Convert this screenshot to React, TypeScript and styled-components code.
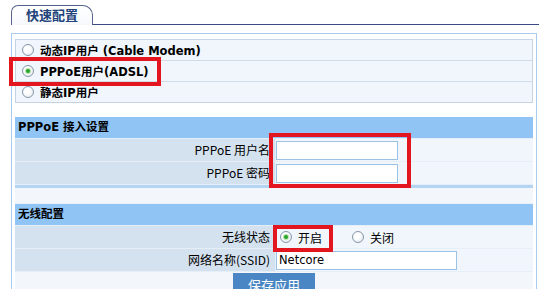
import styled, { createGlobalStyle } from "styled-components";

const GlobalStyle = createGlobalStyle`
  html, body {
    margin: 0;
    padding: 0;
    background: #ffffff;
  }
  body {
    font-family: "Noto Sans CJK SC", sans-serif;
    font-size: 12px;
    color: #000;
  }
`;

// PAGE
const Page = styled.div`
  width: 539px;
  height: 289px;
  overflow: hidden;
  padding-top: 5px;
  box-sizing: border-box;
`;

// TAB
const TabBar = styled.div`
  display: flex;
  align-items: flex-end;
  height: 20px;
  padding-left: 11px;
`;

const Tab = styled.div`
  width: 82px;
  height: 20px;
  box-sizing: border-box;
  border: 1px solid #56648c;
  border-bottom: none;
  border-radius: 7px 10px 0 0;
  background: linear-gradient(#ffffff, #f6f9fc);
  color: #22427a;
  font-weight: bold;
  font-size: 13px;
  line-height: 18px;
  text-align: center;
`;

const TabLine = styled.div`
  flex: 1;
  height: 20px;
  box-sizing: border-box;
  border-bottom: 1px solid #3c4a86;
`;

// PANEL
const Panel = styled.div`
  margin: 8px 2px 0 11px;
  height: 300px;
  border: 1px solid #a8ccf0;
  padding: 5px 3px 0;
`;

const RadioList = styled.div`
  border: 1px solid #c5d3e2;
  background: #f0f6fc;
`;

const RadioRow = styled.div`
  height: 20px;
  display: flex;
  align-items: center;
  padding-left: 6px;
  & + & {
    border-top: 1px solid #d2dce7;
  }
`;

const Choice = styled.label<{ $bold?: boolean }>`
  display: inline-flex;
  align-items: center;
  gap: 6px;
  height: 100%;
  font-family: ${(p) =>
    p.$bold ? '"DejaVu Sans", "Noto Sans CJK SC", sans-serif' : '"Noto Sans CJK SC", sans-serif'};
  font-weight: ${(p) => (p.$bold ? "bold" : "normal")};
  font-size: ${(p) => (p.$bold ? "11.5px" : "12px")};
  white-space: nowrap;
`;

// Red annotation frame painted over the content
const Marked = styled.span<{ $t: number; $r: number; $b: number; $l: number }>`
  position: relative;
  display: inline-flex;
  height: 100%;
  &::after {
    content: "";
    position: absolute;
    top: ${(p) => -p.$t}px;
    right: ${(p) => -p.$r}px;
    bottom: ${(p) => -p.$b}px;
    left: ${(p) => -p.$l}px;
    border: 4px solid #e3161f;
    z-index: 3;
    pointer-events: none;
  }
`;

const RadioDot = styled.span<{ $on?: boolean }>`
  width: 12px;
  height: 12px;
  box-sizing: border-box;
  border-radius: 50%;
  border: 1px solid #8696aa;
  background: radial-gradient(circle at 40% 40%, #ffffff 30%, #dde3ea 100%);
  display: inline-flex;
  align-items: center;
  justify-content: center;
  &::before {
    content: "";
    display: ${(p) => (p.$on ? "block" : "none")};
    width: 4px;
    height: 4px;
    border-radius: 50%;
    background: #27a52b;
    box-shadow: 0 0 0 1px #b7e3b0;
  }
`;

// FORM TABLE
const FormTable = styled.div`
  margin-top: 14px;
  display: grid;
  grid-template-columns: 260px 1fr;
  gap: 1px;
  background: #e6eef7;
`;

const SectionHead = styled.div`
  grid-column: 1 / -1;
  height: 21px;
  line-height: 21px;
  padding-left: 3px;
  background: #8fc4f4;
  font-family: "DejaVu Sans", "Noto Sans CJK SC", sans-serif;
  font-weight: bold;
  font-size: 11.5px;
`;

const Label = styled.div`
  height: 22px;
  line-height: 22px;
  background: #d4e2ef;
  text-align: right;
  padding-right: 5px;
  white-space: nowrap;
`;

const Value = styled.div`
  position: relative;
  display: flex;
  align-items: center;
  background: #f0f6fb;
`;

const InputFrame = styled.div`
  position: absolute;
  left: -7px;
  top: -6px;
  width: 142px;
  height: 55px;
  box-sizing: border-box;
  border: 4px solid #e3161f;
  z-index: 3;
  pointer-events: none;
`;

const TextInput = styled.input<{ $w: number }>`
  width: ${(p) => p.$w}px;
  height: 19px;
  box-sizing: border-box;
  margin: 0;
  padding: 0 2px;
  border: 1px solid #9cc2e6;
  background: #ffffff;
  font-family: "DejaVu Sans", sans-serif;
  font-size: 11.5px;
  color: #000;
  outline: none;
`;

const SectionFoot = styled.div`
  grid-column: 1 / -1;
  height: 18px;
  box-sizing: border-box;
  border-top: 3px solid #b3d5f3;
  background: #f3f7fb;
`;

const RadioGroup = styled.div`
  display: flex;
  align-items: center;
  height: 100%;
  padding-left: 4px;
  gap: 30px;
`;

const ActionRow = styled.div`
  grid-column: 1 / -1;
  height: 30px;
  background: #f3f7fb;
  display: flex;
  justify-content: center;
  padding-top: 1px;
`;

const SaveButton = styled.button`
  width: 82px;
  height: 24px;
  border: none;
  background: #4a86c4;
  color: #ffffff;
  font-family: "Noto Sans CJK SC", sans-serif;
  font-size: 13px;
  line-height: 18px;
  padding: 0;
`;

export default function App() {
  return (
    <>
      <GlobalStyle />
      <Page>
        <TabBar>
          <Tab>快速配置</Tab>
          <TabLine />
        </TabBar>

        <Panel>
          <RadioList>
            <RadioRow>
              <Choice $bold>
                <RadioDot />
                动态IP用户 (Cable Modem)
              </Choice>
            </RadioRow>
            <RadioRow>
              <Marked $t={4} $r={12} $b={5} $l={13}>
                <Choice $bold>
                  <RadioDot $on />
                  PPPoE用户(ADSL)
                </Choice>
              </Marked>
            </RadioRow>
            <RadioRow>
              <Choice $bold>
                <RadioDot />
                静态IP用户
              </Choice>
            </RadioRow>
          </RadioList>

          <FormTable>
            <SectionHead>PPPoE 接入设置</SectionHead>
            <Label>PPPoE 用户名</Label>
            <Value>
              <TextInput $w={122} defaultValue="" />
              <InputFrame />
            </Value>
            <Label>PPPoE 密码</Label>
            <Value>
              <TextInput $w={122} type="password" defaultValue="" />
            </Value>
            <SectionFoot />

            <SectionHead>无线配置</SectionHead>
            <Label>无线状态</Label>
            <Value>
              <RadioGroup>
                <Marked $t={1} $r={11} $b={4} $l={7}>
                  <Choice>
                    <RadioDot $on />
                    开启
                  </Choice>
                </Marked>
                <Choice>
                  <RadioDot />
                  关闭
                </Choice>
              </RadioGroup>
            </Value>
            <Label>网络名称(SSID)</Label>
            <Value>
              <TextInput $w={181} defaultValue="Netcore" />
            </Value>
            <ActionRow>
              <SaveButton>保存应用</SaveButton>
            </ActionRow>
          </FormTable>
        </Panel>
      </Page>
    </>
  );
}
